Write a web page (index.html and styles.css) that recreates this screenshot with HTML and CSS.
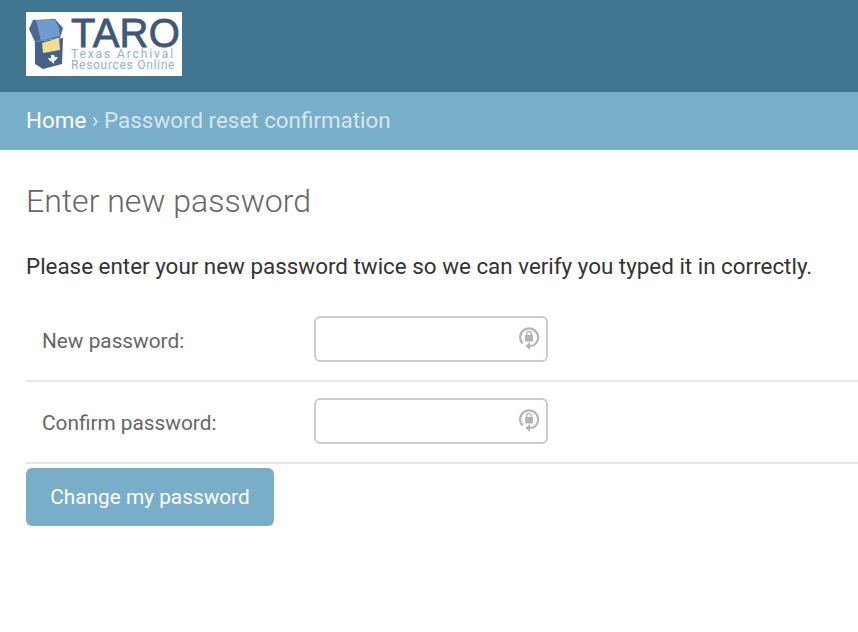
FILE: index.html
```html
<!DOCTYPE html>
<html lang="en">
<head>
    <meta charset="UTF-8">
    <meta name="viewport" content="width=device-width, initial-scale=1.0">
    <title>Password reset confirmation</title>
    <link rel="stylesheet" href="styles.css">
</head>
<body>
    <header class="site-header">
        <a class="logo" href="#">
            <svg class="logo-box" width="35" height="51" viewBox="0 0 35 51">
                <path d="M0 10 L4 1 L26 0 L34 9 L31 19 L6 23 Z" fill="#4a6a94"/>
                <path d="M7 1 L26 1 L30 9 L31 17 L12 22 Z" fill="#6f9bd0"/>
                <path d="M6 23 L34 19 L33 45 L14 50 L6 45 Z" fill="#44618a"/>
                <path d="M13 24 L30 19 L31 31 L14 34 Z" fill="#f3de8e"/>
                <path d="M22 36 L25 36 L26 38 L29 38 L27 41 L25 42 L25 45 L23 43 L20 41 L19 39 L22 39 Z" fill="#fff"/>
            </svg>
            <span class="logo-text">
                <span class="logo-name">TARO</span>
                <span class="logo-sub logo-sub-wide">Texas Archival</span>
                <span class="logo-sub">Resources Online</span>
            </span>
        </a>
    </header>

    <nav class="breadcrumbs">
        <a href="#">Home</a> <span class="sep">›</span> Password reset confirmation
    </nav>

    <main class="content">
        <h1>Enter new password</h1>
        <p class="intro">Please enter your new password twice so we can verify you typed it in correctly.</p>

        <form>
            <div class="form-row">
                <label for="pass1">New password:</label>
                <span class="field">
                    <input type="password" id="pass1">
                    <svg class="key-icon" width="22" height="26" viewBox="0 0 22 26">
                        <path d="M4.5 18.5 A9 9 0 1 1 15 20.5 L11 20.8" fill="none" stroke="#b4b4b4" stroke-width="2.2"/>
                        <path d="M12 17 L7.5 21 L12 25 Z" fill="#b4b4b4"/>
                        <rect x="7" y="10" width="8" height="6.5" rx="1" fill="#b4b4b4"/>
                        <path d="M8.8 10 V8.5 A2.2 2.2 0 0 1 13.2 8.5 V10" fill="none" stroke="#b4b4b4" stroke-width="1.3"/>
                    </svg>
                </span>
            </div>
            <div class="form-row">
                <label for="pass2">Confirm password:</label>
                <span class="field">
                    <input type="password" id="pass2">
                    <svg class="key-icon" width="22" height="26" viewBox="0 0 22 26">
                        <path d="M4.5 18.5 A9 9 0 1 1 15 20.5 L11 20.8" fill="none" stroke="#b4b4b4" stroke-width="2.2"/>
                        <path d="M12 17 L7.5 21 L12 25 Z" fill="#b4b4b4"/>
                        <rect x="7" y="10" width="8" height="6.5" rx="1" fill="#b4b4b4"/>
                        <path d="M8.8 10 V8.5 A2.2 2.2 0 0 1 13.2 8.5 V10" fill="none" stroke="#b4b4b4" stroke-width="1.3"/>
                    </svg>
                </span>
            </div>
            <button type="button">Change my password</button>
        </form>
    </main>
</body>
</html>
```

FILE: styles.css
```css
body {
    font-family: Roboto, "Liberation Sans", sans-serif;
    background-color: #fff;
    color: #333;
    margin: 0;
}

.site-header {
    height: 92px;
    background-color: #417690;
    padding: 12px 26px 0;
    box-sizing: border-box;
}

.logo {
    display: flex;
    align-items: center;
    gap: 7px;
    width: 156px;
    height: 64px;
    padding-left: 3px;
    box-sizing: border-box;
    background: #fff;
    text-decoration: none;
}

.logo-text {
    display: flex;
    flex-direction: column;
}

.logo-name {
    font-family: "Liberation Sans", sans-serif;
    font-size: 40px;
    line-height: 32px;
    letter-spacing: 0.2px;
    color: #3f5879;
    -webkit-text-stroke: 0.8px #3f5879;
}

.logo-sub {
    font-size: 12px;
    line-height: 11px;
    letter-spacing: 0.7px;
    color: #8fb1dc;
    white-space: nowrap;
}

.logo-sub-wide {
    letter-spacing: 1.9px;
}

.breadcrumbs {
    height: 58px;
    background-color: #79aec8;
    padding: 0 26px;
    font-size: 22.4px;
    line-height: 56px;
    color: #d5e6ef;
}

.breadcrumbs a {
    color: #fff;
    text-decoration: none;
}

.content {
    padding: 0 0 0 26px;
}

h1 {
    margin: 32px 0 0;
    font-size: 32px;
    line-height: 38px;
    font-weight: 300;
    color: #666;
}

.intro {
    margin: 32px 0 18px;
    font-size: 22.4px;
    line-height: 28px;
    color: #333;
}

.form-row {
    display: flex;
    align-items: center;
    height: 84px;
    padding: 0 16px;
    border-bottom: 2px solid #e6e6e6;
    box-sizing: border-box;
}

.form-row + .form-row {
    height: 82px;
    padding-bottom: 2px;
}

label {
    width: 272px;
    padding-top: 3px;
    font-size: 20.8px;
    color: #666;
}

.field {
    position: relative;
    display: block;
}

input {
    display: block;
    width: 234px;
    height: 46px;
    box-sizing: border-box;
    border: 2px solid #ccc;
    border-radius: 6px;
    background: #fff;
}

.key-icon {
    position: absolute;
    right: 8px;
    top: 9px;
}

button {
    display: block;
    margin-top: 4px;
    width: 248px;
    height: 58px;
    border: none;
    border-radius: 6px;
    background-color: #79aec8;
    color: #fff;
    font-family: inherit;
    font-size: 20.8px;
    cursor: pointer;
}
```
